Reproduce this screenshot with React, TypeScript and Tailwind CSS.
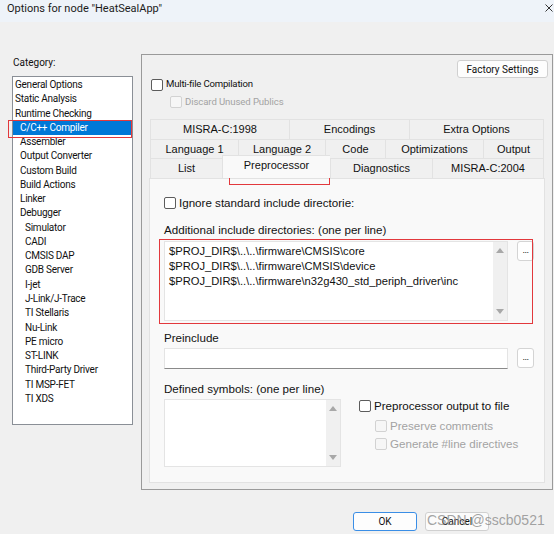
import React from 'react';

const UI = "font-[Roboto,'Liberation_Sans',sans-serif]";
const YH = "font-['Liberation_Sans','Noto_Sans_CJK_SC',sans-serif]";

type Item = { label: string; level: number; selected?: boolean };

const categories: Item[] = [
  { label: 'General Options', level: 0 },
  { label: 'Static Analysis', level: 0 },
  { label: 'Runtime Checking', level: 0 },
  { label: 'C/C++ Compiler', level: 1, selected: true },
  { label: 'Assembler', level: 1 },
  { label: 'Output Converter', level: 1 },
  { label: 'Custom Build', level: 1 },
  { label: 'Build Actions', level: 1 },
  { label: 'Linker', level: 1 },
  { label: 'Debugger', level: 1 },
  { label: 'Simulator', level: 2 },
  { label: 'CADI', level: 2 },
  { label: 'CMSIS DAP', level: 2 },
  { label: 'GDB Server', level: 2 },
  { label: 'I-jet', level: 2 },
  { label: 'J-Link/J-Trace', level: 2 },
  { label: 'TI Stellaris', level: 2 },
  { label: 'Nu-Link', level: 2 },
  { label: 'PE micro', level: 2 },
  { label: 'ST-LINK', level: 2 },
  { label: 'Third-Party Driver', level: 2 },
  { label: 'TI MSP-FET', level: 2 },
  { label: 'TI XDS', level: 2 },
];

const tabRows: { label: string; w: number; active?: boolean }[][] = [
  [
    { label: 'MISRA-C:1998', w: 139 },
    { label: 'Encodings', w: 120 },
    { label: 'Extra Options', w: 135 },
  ],
  [
    { label: 'Language 1', w: 88 },
    { label: 'Language 2', w: 87 },
    { label: 'Code', w: 60 },
    { label: 'Optimizations', w: 98 },
    { label: 'Output', w: 61 },
  ],
  [
    { label: 'List', w: 72 },
    { label: 'Preprocessor', w: 108, active: true },
    { label: 'Diagnostics', w: 102 },
    { label: 'MISRA-C:2004', w: 112 },
  ],
];

const includeDirs = [
  '$PROJ_DIR$\\..\\..\\firmware\\CMSIS\\core',
  '$PROJ_DIR$\\..\\..\\firmware\\CMSIS\\device',
  '$PROJ_DIR$\\..\\..\\firmware\\n32g430_std_periph_driver\\inc',
];

const Check = ({ disabled }: { disabled?: boolean }) => (
  <span
    className={`inline-block w-[12px] h-[12px] shrink-0 rounded-[2px] border ${
      disabled ? 'border-[#d2d2d2] bg-[#f6f6f6]' : 'border-[#5c5c5c] bg-white'
    }`}
  />
);

const Dots = () => (
  <div className="w-[17px] h-[20px] shrink-0 bg-white border border-[#d4d4d4] rounded-[3px] flex items-center justify-center">
    <span className="text-[9px] leading-none text-[#222] -mt-[2px] tracking-[-0.5px]">...</span>
  </div>
);

const ScrollBar = () => (
  <div className="w-[14px] h-full bg-[#f0f0f0] flex flex-col items-center justify-between py-[6px]">
    <span className="w-0 h-0 border-l-[4px] border-r-[4px] border-b-[5px] border-l-transparent border-r-transparent border-b-[#a8a8a8]" />
    <span className="w-0 h-0 border-l-[4px] border-r-[4px] border-t-[5px] border-l-transparent border-r-transparent border-t-[#a8a8a8]" />
  </div>
);

export default function App() {
  return (
    <div className={`relative w-[554px] h-[534px] overflow-hidden bg-[#f0f0f0] text-[#111] ${UI}`}>
      {/* title bar */}
      <div className="h-[22px] bg-[#eef3f9] flex items-center justify-between pl-[7px] pr-[1px]">
        <span className="text-[11px] text-[#1b1b1b] -mt-[4px]">Options for node "HeatSealApp"</span>
        <svg width="8" height="8" viewBox="0 0 8 8" className="-mt-[6px]">
          <path d="M0.5 0.5 L7.5 7.5 M7.5 0.5 L0.5 7.5" stroke="#333" strokeWidth="1" />
        </svg>
      </div>

      <div className="flex items-start">
        {/* category column */}
        <div className="pl-[12px] pt-[34px] w-[141px]">
          <div className="h-[14px] leading-[14px] text-[10px] pl-[1px]">Category:</div>
          <div className="mt-[6px] w-[121px] h-[349px] bg-white border border-[#8a8f96] pt-[1px]">
            {categories.map((c) => (
              <div
                key={c.label}
                className={`h-[14.27px] leading-[14.27px] text-[10px] tracking-[-0.25px] whitespace-nowrap ${
                  c.selected ? 'bg-[#0078d7] text-white' : 'text-[#111]'
                } ${c.level === 0 ? 'pl-[2px]' : c.level === 1 ? 'pl-[7px]' : 'pl-[12px]'}`}
              >
                {c.label}
              </div>
            ))}
          </div>
        </div>

        {/* options panel */}
        <div className="mt-[32px] flex flex-col">
          <div className="w-[412px] h-[436px] border border-[#9a9a9a] flex flex-col">
            <div className="flex justify-end pt-[5px] pr-[4px]">
              <div className="w-[91px] h-[18px] bg-[#fdfdfd] border border-[#d0d0d0] rounded-[3px] flex items-center justify-center text-[10px]">
                Factory Settings
              </div>
            </div>
            <div className="h-[13px] flex items-center pl-[9px] gap-[3px] text-[9.6px] tracking-[-0.2px]">
              <Check />
              <span>Multi-file Compilation</span>
            </div>
            <div className="mt-[4px] h-[14px] flex items-center pl-[28px] gap-[3px] text-[9.6px] tracking-[-0.1px] text-[#a3a3a3]">
              <Check disabled />
              <span>Discard Unused Publics</span>
            </div>

            {/* tabs */}
            <div className={`mt-[10px] ml-[7px] w-[396px] ${YH}`}>
              {tabRows.map((row, ri) => (
                <div key={ri} className={`flex px-[1px] ${ri === 1 ? 'h-[19px]' : 'h-[20px]'}`}>
                  {row.map((t, ti) => (
                    <div
                      key={t.label}
                      style={{ width: t.w }}
                      className={`flex items-center justify-center text-[11px] text-[#111] border-t border-l border-[#e2e2e2] ${
                        ti === row.length - 1 ? 'border-r' : ''
                      } ${t.active ? 'relative z-10 bg-[#f9f9f9] h-[23px] -mt-[3px] pb-[4px]' : 'bg-[#f0f0f0]'}`}
                    >
                      {t.label}
                    </div>
                  ))}
                </div>
              ))}

              <div className="h-[305px] bg-[#f9f9f9] border border-[#e2e2e2] pl-[14px] flex flex-col">
                <div className="mt-[17px] h-[14px] flex items-center gap-[3px] text-[11.6px]">
                  <Check />
                  <span>Ignore standard include directorie:</span>
                </div>
                <div className="mt-[13px] h-[14px] leading-[14px] text-[11.6px]">
                  Additional include directories: (one per line)
                </div>
                <div className="mt-[4px] flex items-start gap-[9px]">
                  <div className="w-[344px] h-[80px] bg-white border border-[#e4e4e4] flex">
                    <div className="flex-1 pl-[4px] pt-[2px] text-[11.2px] leading-[15px] text-[#111]">
                      {includeDirs.map((d) => (
                        <div key={d} className="whitespace-nowrap">{d}</div>
                      ))}
                    </div>
                    <ScrollBar />
                  </div>
                  <Dots />
                </div>

                <div className="mt-[10px] h-[14px] leading-[14px] text-[11.6px]">Preinclude</div>
                <div className="mt-[3px] flex items-start gap-[9px]">
                  <div className="w-[344px] h-[21px] bg-white border border-[#e4e4e4] border-b-[#8a8a8a]" />
                  <Dots />
                </div>

                <div className="mt-[13px] h-[14px] leading-[14px] text-[11.6px]">Defined symbols: (one per line)</div>
                <div className="mt-[3px] flex items-start">
                  <div className="w-[177px] h-[68px] bg-white border border-[#e4e4e4] flex">
                    <div className="flex-1" />
                    <ScrollBar />
                  </div>
                  <div className="ml-[18px] flex flex-col text-[11.6px]">
                    <div className="h-[14px] flex items-center gap-[3px]">
                      <Check />
                      <span>Preprocessor output to file</span>
                    </div>
                    <div className="mt-[6px] h-[14px] flex items-center gap-[3px] pl-[16px] text-[#a3a3a3]">
                      <Check disabled />
                      <span>Preserve comments</span>
                    </div>
                    <div className="mt-[4px] h-[14px] flex items-center gap-[3px] pl-[16px] text-[#a3a3a3]">
                      <Check disabled />
                      <span>Generate #line directives</span>
                    </div>
                  </div>
                </div>
              </div>
            </div>
          </div>

          {/* dialog buttons */}
          <div className="mt-[22px] ml-[212px] flex gap-[8px]">
            <div className="w-[64px] h-[19px] bg-[#fdfdfd] border-[1.5px] border-[#3a8ee6] rounded-[3px] flex items-center justify-center text-[10px]">
              OK
            </div>
            <div className="w-[64px] h-[19px] bg-[#fbfbfb] border border-[#d0d0d0] rounded-[3px] flex items-center justify-center text-[10px]">
              Cancel
            </div>
          </div>
        </div>
      </div>

      {/* annotation boxes */}
      <div className="absolute left-[8px] top-[120px] w-[124px] h-[18px] border border-[#e2383c]" />
      <div className="absolute left-[229px] top-[157px] w-[101px] h-[28px] border border-[#e2383c]" />
      <div className="absolute left-[159px] top-[239px] w-[374px] h-[85px] border border-[#e2383c]" />

      {/* watermark */}
      <div className="absolute left-[427px] top-[511px] text-[14px] leading-[18px] text-[#8c8c8c]/80 font-['Liberation_Sans',sans-serif]">
        CSDN @sscb0521
      </div>
    </div>
  );
}
